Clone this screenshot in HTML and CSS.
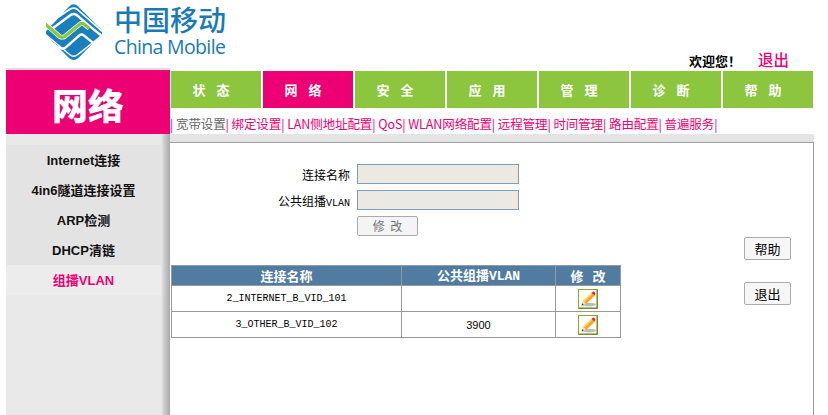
FILE: index.html
```html
<!DOCTYPE html>
<html lang="zh">
<head>
<meta charset="utf-8">
<title>中国移动</title>
<link rel="stylesheet" href="styles.css">
</head>
<body>
<header class="top">
  <div class="logo">
    <svg class="mark" viewBox="18 12 166 166" width="56" height="56" fill="none">
      <path d="M16 95 L86 20 Q100 6 114 20 L184 90 Q190 96 184 102 L114 172 Q100 184 86 172 L16 102 Z" fill="#1a7fbd"/>
      <path d="M14 78 L90 27 Q100 21 110 27 L190 98" stroke="#fff" stroke-width="5"/>
      <path d="M38 84 L92 44 Q100 39 108 44 L150 80 L190 112" stroke="#fff" stroke-width="7"/>
      <path d="M14 100 L88 162 Q100 172 112 162 L190 100" stroke="#fff" stroke-width="4"/>
      <path d="M14 114 L56 142 Q66 148 76 141 L118 104 Q124 100 130 105 L176 142" stroke="#fff" stroke-width="7"/>
      <path d="M10 66 L58 108 Q66 113 74 108 L118 72 Q124 67 131 72 L146 84" stroke="#fff" stroke-width="14"/>
      <path d="M14 70 L58 108 Q66 113 74 108 L118 72 Q124 67 131 72 L146 84" stroke="#8cc63f" stroke-width="10"/>
    </svg>
    <div class="brand">
      <div class="brand-cn">中国移动</div>
      <div class="brand-en">China Mobile</div>
    </div>
  </div>
  <div class="welcome"><span>欢迎您！</span><a class="logout">退出</a></div>
</header>

<div class="layout">
  <aside class="side">
    <div class="side-title">网络</div>
    <ul class="side-menu">
      <li>Internet连接</li>
      <li>4in6隧道连接设置</li>
      <li>ARP检测</li>
      <li>DHCP清链</li>
      <li class="active">组播VLAN</li>
    </ul>
  </aside>

  <main class="main">
    <nav class="tabs">
      <a class="tab">状 态</a>
      <a class="tab on">网 络</a>
      <a class="tab">安 全</a>
      <a class="tab">应 用</a>
      <a class="tab">管 理</a>
      <a class="tab">诊 断</a>
      <a class="tab">帮 助</a>
    </nav>
    <div class="subnav"><span class="sep">|</span> <a class="cur">宽带设置</a><span class="sep">|</span> <a>绑定设置</a><span class="sep">|</span> <a>LAN侧地址配置</a><span class="sep">|</span> <a>QoS</a><span class="sep">|</span> <a>WLAN网络配置</a><span class="sep">|</span> <a>远程管理</a><span class="sep">|</span> <a>时间管理</a><span class="sep">|</span> <a>路由配置</a><span class="sep">|</span> <a>普遍服务</a><span class="sep">|</span></div>
    <div class="band"></div>
    <section class="content">
      <div class="work">
        <form class="form">
          <div class="row"><label>连接名称</label><input class="field" disabled></div>
          <div class="row"><label>公共组播<span class="mono">VLAN</span></label><input class="field" disabled></div>
          <div class="row"><label></label><button type="button" class="btn-edit" disabled>修 改</button></div>
        </form>
        <table class="list">
          <colgroup><col class="c1"><col class="c2"><col class="c3"></colgroup>
          <thead>
            <tr><th>连接名称</th><th>公共组播<span class="mono">VLAN</span></th><th class="th-edit">修 改</th></tr>
          </thead>
          <tbody>
            <tr><td class="mono">2_INTERNET_B_VID_101</td><td></td><td>
              <svg class="pencil" viewBox="0 0 20 20" width="20" height="20">
                <rect x="0.500" y="0.500" width="19" height="19" fill="#fdfdf6" stroke="#8aa53a"/>
                <path d="M1 19 H19 V1" fill="none" stroke="#5f7f24"/>
                <ellipse cx="11" cy="15.500" rx="7" ry="1.800" fill="#bbb"/>
                <path d="M5 12 L14 3.500 L17 6.500 L8 15 Z" fill="#f7a823"/>
                <path d="M5 12 L14 3.500 L15 4.500 L6 13 Z" fill="#fdd26b"/>
                <path d="M13.500 4 L15 2.500 C16 2 17.500 3.500 17.500 5 L16.500 6.500 Z" fill="#d3323c"/>
                <path d="M5 12 L8 15 L3.500 16.500 Z" fill="#f5dcb0"/>
                <path d="M3.500 16.500 L4.300 14.300 L5.700 15.700 Z" fill="#333"/>
              </svg>
            </td></tr>
            <tr><td class="mono">3_OTHER_B_VID_102</td><td class="num">3900</td><td>
              <svg class="pencil" viewBox="0 0 20 20" width="20" height="20">
                <rect x="0.500" y="0.500" width="19" height="19" fill="#fdfdf6" stroke="#8aa53a"/>
                <path d="M1 19 H19 V1" fill="none" stroke="#5f7f24"/>
                <ellipse cx="11" cy="15.500" rx="7" ry="1.800" fill="#bbb"/>
                <path d="M5 12 L14 3.500 L17 6.500 L8 15 Z" fill="#f7a823"/>
                <path d="M5 12 L14 3.500 L15 4.500 L6 13 Z" fill="#fdd26b"/>
                <path d="M13.500 4 L15 2.500 C16 2 17.500 3.500 17.500 5 L16.500 6.500 Z" fill="#d3323c"/>
                <path d="M5 12 L8 15 L3.500 16.500 Z" fill="#f5dcb0"/>
                <path d="M3.500 16.500 L4.300 14.300 L5.700 15.700 Z" fill="#333"/>
              </svg>
            </td></tr>
          </tbody>
        </table>
      </div>
      <div class="actions">
        <button type="button" class="btn-side">帮助</button>
        <button type="button" class="btn-side">退出</button>
      </div>
    </section>
  </main>
</div>
</body>
</html>
```

FILE: styles.css
```css
* { box-sizing: border-box; }
html, body { margin: 0; height: 100%; background: #fff; overflow: hidden; }
body {
  font-family: "Noto Sans CJK SC", "Liberation Sans", sans-serif;
  font-size: 12px;
  color: #000;
  width: 828px;
  height: 415px;
}
a { text-decoration: none; color: inherit; }

.top {
  height: 68px;
  padding-left: 46px;
  display: flex;
  justify-content: space-between;
  width: 814px;
}
.logo { display: flex; padding-top: 4px; align-items: flex-start; }
.mark { display: block; }
.brand { margin-left: 12px; width: 114px; margin-top: -1px; }
.brand-cn {
  font-size: 28px;
  line-height: 32px;
  font-weight: 500;
  color: #1a7ab5;
  white-space: nowrap;
}
.brand-en {
  font-family: "Open Sans", "Liberation Sans", sans-serif;
  font-size: 19.500px;
  line-height: 24px;
  letter-spacing: -0.650px;
  color: #1a7ab5;
  white-space: nowrap;
}
.welcome {
  align-self: flex-end;
  display: flex;
  gap: 17px;
  align-items: baseline;
  padding-right: 25px;
  line-height: 15px;
  font-size: 13px;
  font-weight: 700;
}
.logout { color: #ec0074; font-size: 15.500px; font-weight: 500; }

.layout {
  display: flex;
  height: 347px;
  width: 814px;
}
.side {
  width: 164px;
  margin-left: 6px;
  flex: none;
  display: flex;
  flex-direction: column;
  border-top: 2px solid #dcdcdc;
  background: linear-gradient(to right, #e9e9e9 0, #e9e9e9 155px, #cfcfcf 158px, #a9a9a9 164px);
}
.side-title {
  height: 64px;
  background: #ec0074;
  color: #fff;
  font-size: 36px;
  font-weight: 900;
  text-align: center;
  line-height: 68px;
}
.side-menu {
  list-style: none;
  margin: 11px 0 0;
  padding: 0;
  width: 155px;
}
.side-menu li {
  height: 30px;
  line-height: 30px;
  padding-top: 1px;
  background: #e3e3e3;
  text-align: center;
  font-size: 13px;
  font-weight: 700;
  font-family: "Liberation Sans", "Noto Sans CJK SC", sans-serif;
  color: #111;
}
.side-menu li.active { background: #ececec; color: #ec0074; }

.main {
  flex: 1;
  min-width: 0;
  display: flex;
  flex-direction: column;
}
.tabs {
  display: flex;
  gap: 2px;
  padding: 3px 0 0 1px;
  height: 40px;
}
.tab {
  width: 90px;
  height: 37px;
  padding-right: 10px;
  background: #8cc63f;
  color: #fff;
  font-weight: 700;
  font-size: 13px;
  line-height: 37px;
  text-align: center;
  word-spacing: 8px;
  white-space: pre;
}
.tab.on { background: #ec0074; }

.subnav {
  height: 26px;
  line-height: 31px;
  font-size: 12.500px;
  color: #ec0074;
  white-space: nowrap;
  letter-spacing: -0.105px;
  overflow: hidden;
}
.subnav .cur { color: #666; }
.subnav .sep { color: #ec0074; }

.band {
  height: 9px;
  background: #e4e4e4;
  border-bottom: 1px solid #a0a0a0;
}
.content {
  flex: 1;
  display: flex;
  border-right: 1px solid #999;
  min-height: 0;
}
.work { width: 574px; flex: none; padding-left: 1px; }
.form { padding-top: 18px; }
.row { display: flex; align-items: center; height: 26px; }
.row label {
  width: 186px;
  padding-right: 7px;
  text-align: right;
  font-size: 12px;
  white-space: nowrap;
}
.field {
  width: 162px;
  height: 20px;
  background: #ebe9e2;
  border: 1px solid #7f9db9;
  margin: 0;
  padding: 0;
  border-radius: 0;
}
.btn-edit {
  width: 61px;
  height: 20px;
  padding: 0;
  background: #f4f4f4;
  border: 1px solid #ababab;
  border-radius: 2px;
  color: #777;
  font: inherit;
  line-height: 16px;
  word-spacing: 3px;
}
.mono { font-family: "Liberation Mono", monospace; font-size: 10px; }
.list {
  margin-top: 26px;
  width: 449px;
  border-collapse: collapse;
  table-layout: fixed;
  border: 1px solid #999;
}
.c1 { width: 230px; }
.c2 { width: 154px; }
.c3 { width: 65px; }
.list th {
  height: 19px;
  padding: 0;
  background: #517ca2;
  color: #fff;
  font-size: 13px;
  font-weight: 700;
  line-height: 17px;
  border: 1px solid #999;
}
.list th .mono { font-weight: 700; font-size: 13px; }
.list .th-edit { word-spacing: 6px; }
.list td {
  height: 26px;
  padding: 0;
  text-align: center;
  border: 1px solid #999;
  vertical-align: middle;
}
.list .num { font-family: "Liberation Sans", sans-serif; font-size: 11px; }
.pencil { display: block; margin: 0 auto; }

.actions {
  flex: 1;
  display: flex;
  flex-direction: column;
  align-items: flex-end;
  gap: 22px;
  padding: 94px 22px 0 0;
}
.btn-side {
  width: 47px;
  height: 23px;
  padding: 0;
  background: #f6f6f6;
  border: 1px solid #ababab;
  border-radius: 2px;
  font: inherit;
  font-size: 13px;
  color: #000;
}
```
